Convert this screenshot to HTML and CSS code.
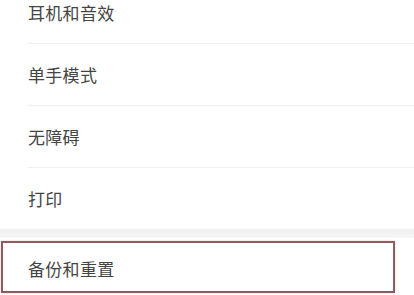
FILE: index.html
```html
<!DOCTYPE html>
<html lang="zh-CN">
<head>
<meta charset="utf-8">
<link rel="stylesheet" href="styles.css">
</head>
<body>
<div class="page">
  <section class="group group-first">
    <div class="row"><span class="label">耳机和音效</span></div>
    <div class="row"><span class="label">单手模式</span></div>
    <div class="row"><span class="label">无障碍</span></div>
    <div class="row"><span class="label">打印</span></div>
  </section>
  <div class="gap"></div>
  <section class="group">
    <div class="row row-marked">
      <span class="label">备份和重置</span>
      <div class="mark"></div>
    </div>
  </section>
</div>
</body>
</html>
```
FILE: styles.css
```css
html, body {
  margin: 0;
  padding: 0;
  background: #ffffff;
}
.page {
  width: 414px;
  height: 295px;
  overflow: hidden;
  font-family: "Noto Sans CJK SC", "Noto Sans", sans-serif;
}
.group {
  background: #ffffff;
}
.group-first {
  margin-top: -19px;
}
.row {
  position: relative;
  height: 62px;
  display: flex;
  align-items: center;
  padding-left: 28px;
}
.row + .row::before {
  content: "";
  position: absolute;
  top: 0;
  left: 28px;
  right: 0;
  height: 1px;
  background: #f0f0f0;
}
.label {
  font-size: 17px;
  color: #444444;
  letter-spacing: 0.3px;
}
.gap {
  height: 9px;
  background: linear-gradient(#efefef, #f6f6f6);
}
.row-marked .label {
  margin-top: -2px;
}
.mark {
  position: absolute;
  left: 1px;
  top: 3px;
  width: 390px;
  height: 48px;
  border: 2px solid #8c5c62;
  box-shadow: 0 0 2px rgba(220, 120, 130, 0.45);
}
```
